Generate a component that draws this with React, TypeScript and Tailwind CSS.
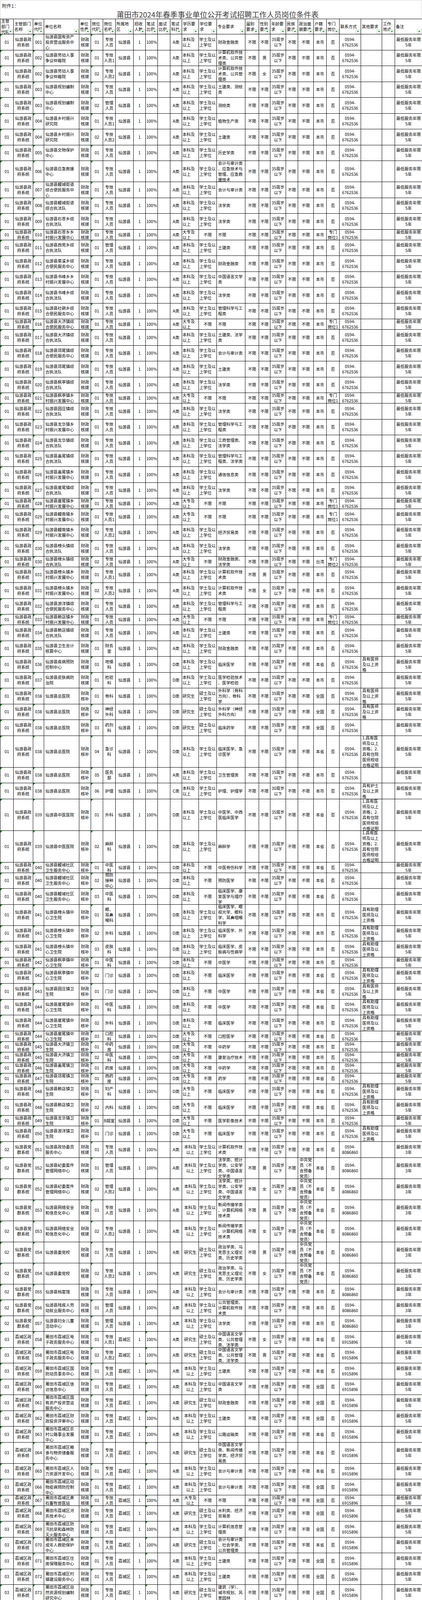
import React from "react";

// 26 columns, widths measured from the sheet
const GRID =
  "grid grid-cols-[34px_50px_28px_90px_30px_31px_32px_46px_31px_31px_32px_30px_43px_46px_73px_35px_29px_40px_31px_40px_33px_33px_55px_54px_33px_70px]";

const HEADERS = [
  "主管部门代码", "主管部门名称", "单位代码", "单位名称", "单位性质", "岗位代码", "岗位名称",
  "所属地区", "招收人数", "笔试比例", "面试比例", "笔试科目", "学历要求", "学位要求", "专业要求",
  "届别要求", "性别要求", "年龄要求", "民族要求", "政治面貌要求", "户籍要求", "专门岗位",
  "联系方式", "其他要求", "工作地点", "备注",
];

const HEIGHTS = {
  n: "h-[40.5px]",
  s: "h-[27px]",
  t: "h-[54px]",
  x: "h-[81px]",
};

type H = keyof typeof HEIGHTS;
type G = 1 | 2 | 3;

type Opt = {
  subj?: string;
  edu?: string;
  deg?: string;
  sex?: string;
  age?: string;
  pol?: string;
  hj?: string;
  sp?: string;
  other?: string;
  num?: string;
  nat?: string;
};

type Row = { g: G; h: H; cells: string[] };

const GROUPS = {
  1: { code: "01", name: "仙游县政府系统", area: "仙游县", tel: "0594-6762536", note: "最低服务年限5年" },
  2: { code: "02", name: "仙游县党群系统", area: "仙游县", tel: "0594-8086860", note: "最低服务年限3年" },
  3: { code: "03", name: "荔城区政府系统", area: "荔城区", tel: "0594-6915896", note: "最低服务年限5年" },
};

function mk(g: G, h: H, unit: string, name: string, post: string, pname: string, major: string, o: Opt = {}): Row {
  const grp = GROUPS[g];
  return {
    g,
    h,
    cells: [
      grp.code, grp.name, unit, name, o.nat ?? "财政核拨", post, pname, grp.area, o.num ?? "1", "100%", "",
      o.subj ?? "A类", o.edu ?? "本科及以上", o.deg ?? "学士及以上学位", major, "不限", o.sex ?? "不限",
      o.age ?? "35周岁以下", "不限", o.pol ?? "不限", o.hj ?? "本市", o.sp ?? "否", grp.tel, o.other ?? "", "", grp.note,
    ],
  };
}

const DZ: Opt = { edu: "大专及以上", deg: "不限" };
const YJ: Opt = { edu: "研究生", deg: "硕士及以上学位" };
const SP1: Opt = { ...DZ, sp: "专门岗位1" };
const YS = "具有医师及以上资格";
const ZL = "具有助理医师及以上资格";
const GP = "1.具有医师及以上资格；2.具有住院医师规培合格证明";
const DY = "中共党员（不含预备党员）";
const M = (o: Opt): Opt => ({ subj: "D类", nat: "财政核补", ...o });

const ZY = "仙游县总医院";
const BT = "仙游县榜头镇中心卫生院";

const ROWS: Row[] = [
  mk(1, "n", "001", "仙游县国有资产投资营运服务中心", "01", "专技人员", "财政金融类"),
  mk(1, "n", "002", "仙游县劳动人事争议仲裁院", "01", "专技人员1", "计算机软件技术类、公共管理类", { sex: "男" }),
  mk(1, "n", "002", "仙游县劳动人事争议仲裁院", "02", "专技人员2", "计算机软件技术类、公共管理类", { sex: "女" }),
  mk(1, "n", "003", "仙游县规划编制中心", "01", "专技人员", "土建类、测绘类"),
  mk(1, "n", "003", "仙游县规划编制中心", "02", "管理人员", "测绘类"),
  mk(1, "n", "004", "仙游县乡村振兴研究院", "01", "专技人员1", "植物生产类"),
  mk(1, "n", "004", "仙游县乡村振兴研究院", "02", "专技人员2", "土建类"),
  mk(1, "n", "005", "仙游县文物保护中心", "01", "专技人员", "历史学类"),
  mk(1, "t", "006", "仙游县应急救援中心", "01", "专技人员", "会计与审计类、应急技术与管理、应急救援技术"),
  mk(1, "n", "007", "仙游县鲤城街道综合便民服务中心", "01", "专技人员", "会计与审计类"),
  mk(1, "n", "008", "仙游县鲤城街道综合执法队", "01", "专技人员", "法学类"),
  mk(1, "n", "009", "仙游县石苍乡综合执法队", "01", "专技人员", "法学类"),
  mk(1, "s", "010", "仙游县石苍乡乡村振兴发展中心", "01", "专技人员", "不限", SP1),
  mk(1, "n", "011", "仙游县西苑乡综合执法队", "01", "管理人员", "土建类"),
  mk(1, "n", "012", "仙游县菜溪乡综合便民服务中心", "01", "专技人员", "财政金融类"),
  mk(1, "n", "013", "仙游县书峰乡乡村振兴发展中心", "01", "专技人员", "中国语言文学类"),
  mk(1, "n", "014", "仙游县书峰乡综合执法队", "01", "专技人员", "法学类"),
  mk(1, "n", "015", "仙游县社硎乡综合便民服务中心", "01", "专技人员", "管理科学与工程类"),
  mk(1, "s", "016", "仙游县大济镇综合便民服务中心", "01", "专技人员", "不限", SP1),
  mk(1, "n", "017", "仙游县大济镇综合执法队", "01", "专技人员", "土建类、法学类"),
  mk(1, "n", "018", "仙游县郊尾镇综合便民服务中心", "01", "专技人员", "会计与审计类"),
  mk(1, "n", "019", "仙游县郊尾镇综合执法队", "01", "专技人员", "土建类"),
  mk(1, "n", "020", "仙游县枫亭镇综合执法队", "01", "专技人员", "法学类"),
  mk(1, "s", "021", "仙游县枫亭镇乡村振兴发展中心", "01", "专技人员", "不限", SP1),
  mk(1, "n", "022", "仙游县园庄镇综合执法队", "01", "专技人员", "法学类"),
  mk(1, "n", "023", "仙游县龙华镇乡村振兴发展中心", "01", "专技人员", "管理科学与工程类"),
  mk(1, "n", "024", "仙游县龙华镇综合执法队", "01", "专技人员", "工商管理类、法学类"),
  mk(1, "n", "025", "仙游县盖尾镇综合执法队", "01", "专技人员", "管理科学与工程类、法学类"),
  mk(1, "n", "026", "仙游县盖尾镇乡村振兴发展中心", "01", "专技人员", "通信信息类"),
  mk(1, "n", "027", "仙游县度尾镇综合执法队", "01", "专技人员", "法学类"),
  mk(1, "s", "028", "仙游县度尾镇乡村振兴发展中心", "01", "专技人员", "不限", SP1),
  mk(1, "n", "029", "仙游县鲤南镇乡村振兴发展中心", "01", "专技人员1", "不限", SP1),
  mk(1, "n", "029", "仙游县鲤南镇乡村振兴发展中心", "02", "专技人员2", "经济贸易类"),
  mk(1, "n", "030", "仙游县榜头镇综合执法队", "01", "专技人员", "法学类"),
  mk(1, "s", "030", "仙游县榜头镇综合执法队", "02", "专技人员", "财政金融类、法学类", { ...DZ, hj: "台湾", sp: "专门岗位2" }),
  mk(1, "n", "031", "仙游县榜头镇乡村振兴发展中心", "01", "专技人员1", "计算机软件技术类", { sex: "男" }),
  mk(1, "n", "031", "仙游县榜头镇乡村振兴发展中心", "02", "专技人员2", "计算机软件技术类", { sex: "女" }),
  mk(1, "n", "032", "仙游县游洋镇综合便民服务中心", "01", "专技人员", "管理科学与工程类"),
  mk(1, "s", "033", "仙游县赖店镇乡村振兴发展中心", "01", "专技人员", "不限", SP1),
  mk(1, "n", "034", "仙游县赖店镇综合执法队", "01", "专技人员", "土建类"),
  mk(1, "n", "035", "仙游县卫生会计核算中心", "01", "财务室", "财政金融类"),
  mk(1, "n", "036", "仙游县疾病预防控制中心", "01", "地慢科", "临床医学", { subj: "D类", hj: "本省", other: YS }),
  mk(1, "n", "037", "仙游县皮肤病防治院", "01", "检验科", "医学检验技术、医学检验", { subj: "D类" }),
  mk(1, "n", "038", ZY, "01", "骨科", "外科学（骨科方向）、骨科学", M({ ...YJ, hj: "全国", other: YS })),
  mk(1, "n", "038", ZY, "02", "神经外科", "外科学（神经外科方向）", M({ ...YJ, hj: "全国", other: YS })),
  mk(1, "n", "038", ZY, "03", "药剂科", "临床药学", M({ ...YJ, hj: "全国" })),
  mk(1, "x", "038", ZY, "04", "急诊科", "临床医学、急诊医学", M({ hj: "本省", other: GP })),
  mk(1, "n", "038", ZY, "05", "医务部", "卫生管理类", M({ subj: "A类" })),
  mk(1, "n", "038", ZY, "06", "护理", "护理、护理学", M({ subj: "C类", age: "30周岁以下", other: "具有护士及以上资格" })),
  mk(1, "x", "039", "仙游县中医医院", "01", "外科", "中医学、中西医临床医学", M({ hj: "本省", other: GP })),
  mk(1, "x", "039", "仙游县中医医院", "02", "麻醉科", "麻醉学", M({ hj: "本省", other: GP })),
  mk(1, "s", "040", "仙游县鲤城社区卫生服务中心", "01", "中医科", "中医骨伤科学", M({ deg: "不限", hj: "本省" })),
  mk(1, "n", "040", "仙游县鲤城社区卫生服务中心", "02", "预防接种中心", "预防医学", M({ deg: "不限", hj: "本省" })),
  mk(1, "n", "040", "仙游县鲤城社区卫生服务中心", "03", "中医科", "临床医学、康复医学与理疗学", M({ deg: "不限", hj: "本省" })),
  mk(1, "t", "041", BT, "01", "眼、耳鼻喉科", "临床医学、眼视光学、眼科学、耳鼻咽喉科学", M({ other: ZL })),
  mk(1, "n", "041", BT, "02", "外科", "临床医学、外科学", M({ other: ZL })),
  mk(1, "n", "041", BT, "03", "皮肤科", "临床医学、皮肤病与性病学", M({ other: ZL })),
  mk(1, "s", "042", "仙游县枫亭镇中心卫生院", "01", "中医科", "中医学", M({ deg: "不限" })),
  mk(1, "n", "042", "仙游县枫亭镇中心卫生院", "02", "门诊", "临床医学", M({ deg: "不限", num: "3", hj: "本省", other: ZL })),
  mk(1, "n", "043", "仙游县园庄镇卫生院", "01", "门诊", "中医学", M({ deg: "不限", hj: "本省", other: YS })),
  mk(1, "n", "044", "仙游县度尾镇中心卫生院", "01", "中医科", "中医学", M({ deg: "不限", hj: "本省", other: ZL })),
  mk(1, "n", "044", "仙游县度尾镇中心卫生院", "02", "外科", "临床医学", M({ deg: "不限", other: ZL })),
  mk(1, "s", "044", "仙游县度尾镇中心卫生院", "03", "口腔科", "口腔医学", M({ ...DZ, hj: "本省" })),
  mk(1, "s", "045", "仙游县大济镇卫生院", "01", "中药房", "中药学", M(DZ)),
  mk(1, "s", "045", "仙游县大济镇卫生院", "02", "中医科", "康复治疗技术", M(DZ)),
  mk(1, "s", "046", "仙游县盖尾镇卫生院", "01", "药房", "中药学", M(DZ)),
  mk(1, "s", "047", "仙游县郊尾镇卫生院", "01", "西药房", "药学", M({ ...DZ, hj: "本省" })),
  mk(1, "n", "048", "仙游县赖店镇卫生院", "01", "妇产科", "临床医学", M({ ...DZ, hj: "本省", other: ZL })),
  mk(1, "n", "048", "仙游县赖店镇卫生院", "02", "内科", "临床医学", M({ ...DZ, hj: "本省", other: ZL })),
  mk(1, "s", "049", "仙游县龙华镇卫生院", "01", "B超室", "医学影像技术", M(DZ)),
  mk(1, "n", "050", "仙游县游洋镇卫生院", "01", "门诊", "临床医学", M({ ...DZ, other: ZL })),

  mk(2, "n", "051", "仙游县政协委员服务中心", "01", "专技人员", "计算机软件技术类"),
  mk(2, "t", "052", "仙游县纪委案件管理网络中心", "01", "管理人员", "法学类、统计学类、公安学类、中国语言文学类", { sex: "男", pol: DY, hj: "本省" }),
  mk(2, "t", "052", "仙游县纪委案件管理网络中心", "02", "管理人员2", "法学类、统计学类、公安学类、中国语言文学类", { sex: "女", pol: DY, hj: "本省" }),
  mk(2, "t", "053", "仙游县网络安全和信息化中心", "01", "专技人员", "新闻传播学类、计算机网络技术类", { sex: "男", pol: DY, hj: "本省" }),
  mk(2, "t", "053", "仙游县网络安全和信息化中心", "02", "专技人员2", "新闻传播学类、计算机网络技术类", { sex: "女", pol: DY, hj: "本省" }),
  mk(2, "t", "054", "仙游县委党校", "01", "专技人员", "政治学类、马克思主义理论类、历史学类", { ...YJ, sex: "男", pol: DY, hj: "本省" }),
  mk(2, "t", "054", "仙游县委党校", "02", "专技人员2", "政治学类、马克思主义理论类、历史学类", { ...YJ, sex: "女", pol: DY, hj: "本省" }),
  mk(2, "n", "055", "仙游县档案馆", "01", "专技人员", "会计与审计类"),
  mk(2, "n", "056", "仙游县残疾人劳动就业服务中心", "01", "管理人员", "公共管理类、计算机软件技术类"),
  mk(2, "n", "057", "仙游县妇女儿童活动中心", "01", "管理人员", "法学类"),

  mk(3, "n", "058", "莆田市荔城区电子政务服务中心", "01", "专技人员1", "中国语言文学类、公共管理类、法学类", { ...YJ, sex: "女", hj: "本省" }),
  mk(3, "n", "058", "莆田市荔城区电子政务服务中心", "02", "专技人员2", "中国语言文学类、公共管理类、法学类", { ...YJ, sex: "男", hj: "本省" }),
  mk(3, "n", "059", "莆田市荔城区国防动员事务中心", "01", "专技人员", "土建类", { hj: "本省" }),
  mk(3, "n", "060", "莆田市荔城区信访信息中心", "01", "专技人员", "中国语言文学类", { hj: "全国" }),
  mk(3, "n", "061", "莆田市荔城区国有资产投资营运服务中心", "01", "专技人员", "财政金融类", { ...YJ, hj: "全国" }),
  mk(3, "n", "062", "莆田市荔城区财政投资评审中心", "01", "专技人员", "土建类", { hj: "全国" }),
  mk(3, "n", "063", "莆田市荔城区农村公路事业发展中心", "01", "专技人员", "公路运输类", { hj: "本省" }),
  mk(3, "t", "064", "莆田市荔城区粮食与物资储备服务中心", "01", "专技人员", "中国语言文学类、新闻传播学类、经济贸易类", { ...YJ, hj: "本省" }),
  mk(3, "n", "065", "莆田市荔城区人力资源开发中心", "01", "专技人员", "会计与审计类", { hj: "本省" }),
  mk(3, "n", "066", "莆田市荔城区动物疫病预防控制中心", "01", "专技人员", "会计与审计类", { hj: "全国" }),
  mk(3, "s", "067", "莆田市荔城区黄石畜牧兽医站", "01", "专技人员", "不限", { ...DZ, hj: "全国" }),
  mk(3, "n", "068", "莆田市荔城区河务技术中心", "01", "专技人员", "水利类、经济贸易类", { ...YJ, hj: "全国" }),
  mk(3, "n", "069", "莆田市荔城区防汛抗旱和森林防灭火服务中心", "01", "专技人员", "计算机信息管理类", { hj: "全国" }),
  mk(3, "n", "070", "莆田市荔城区未成年人救助保护中心", "01", "专技人员", "会计与审计类、社会学类、公共管理类", { ...YJ, hj: "本省" }),
  mk(3, "n", "071", "莆田市荔城区住房保障服务中心", "01", "专技人员", "土建类", { hj: "全国" }),
  mk(3, "n", "072", "莆田市荔城区村镇建设服务中心", "01", "专技人员", "土建类", { hj: "全国" }),
  mk(3, "n", "073", "莆田市荔城区自然资源规划编制研究中心", "01", "专技人员", "建筑（学）、城市规划、风景园林", { ...YJ, hj: "全国" }),
];

// left-aligned columns: unit name, major, other requirements
const LEFT = new Set([3, 14, 23]);

function cellAlign(i: number, g: G, v: string) {
  if (LEFT.has(i)) return "text-left pl-[3px] pr-[3px]";
  if (i === 12 && g === 1) return "text-left px-[1px]";
  if (i === 13 && v !== "不限") return "text-left px-[1px]";
  return "text-center px-[1px]";
}

const FilterButton = () => (
  <span className="absolute right-[1px] bottom-[1px] flex h-[11px] w-[12px] items-end justify-center border border-[#c9c9c9] bg-[#fbfbfb] pb-[2px]">
    <span className="h-0 w-0 border-l-[3px] border-r-[3px] border-t-[4px] border-l-transparent border-r-transparent border-t-[#1f9a2e]" />
  </span>
);

const GreenCorner = () => (
  <span className="absolute left-0 top-0 h-0 w-0 border-t-[5px] border-r-[5px] border-t-[#0c8a1c] border-r-transparent" />
);

export default function App() {
  return (
    <div className="w-[1080px] bg-white font-['Noto_Sans_CJK_SC',sans-serif] text-black">
      {/* sheet title area */}
      <div className="h-[48px] border-l border-r border-t border-[#d6d6d6]">
        <p className="pl-[4px] pt-[7px] text-[12px] leading-[14px] text-[#222]">附件1：</p>
        <h1 className="mt-[4px] pl-[34px] text-center text-[19px] font-normal leading-[22px] text-[#3a3a3a]">
          莆田市2024年春季事业单位公开考试招聘工作人员岗位条件表
        </h1>
      </div>

      <div className="border-l border-black">
        {/* header row with filter buttons */}
        <div className={`${GRID} h-[40px] border-t border-black`}>
          {HEADERS.map((t) => (
            <div
              key={t}
              className="relative flex items-center overflow-hidden border-b border-r border-black px-[2px] text-[10.5px] leading-[14px]"
            >
              <span className="w-full text-left">{t}</span>
              <FilterButton />
            </div>
          ))}
        </div>

        {ROWS.map((row, ri) => (
          <div key={ri} className={`${GRID} ${HEIGHTS[row.h]}`}>
            {row.cells.map((v, i) => {
              const green = i === 0 || i === 2 || i === 5 || (i === 9 && row.g === 3);
              const breakAny = i === 14 || i === 23;
              return (
                <div
                  key={i}
                  className={`relative flex items-center overflow-hidden border-b border-r border-black text-[10.5px] leading-[14px] ${cellAlign(i, row.g, v)}`}
                >
                  {green && <GreenCorner />}
                  <span className={`w-full ${breakAny ? "[line-break:anywhere]" : ""}`}>{v}</span>
                </div>
              );
            })}
          </div>
        ))}
      </div>
    </div>
  );
}
